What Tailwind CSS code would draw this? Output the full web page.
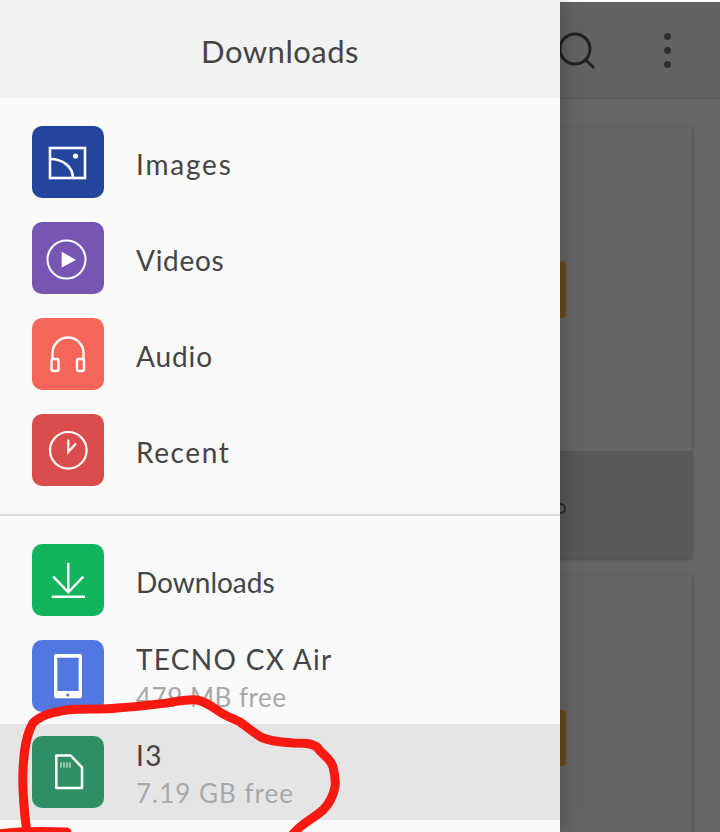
<!DOCTYPE html>
<html lang="en">

<head>
    <meta charset="UTF-8" />
    <meta name="viewport" content="width=device-width, initial-scale=1.0" />
    <title>Downloads drawer</title>
    <script src="https://cdn.jsdelivr.net/npm/@tailwindcss/browser@4"></script>
</head>

<body>
    <div class="relative w-[720px] h-[832px] overflow-hidden bg-white font-['Lato',sans-serif]">
        <!-- Dimmed app behind the drawer -->
        <div class="mt-[2px] h-[830px] bg-[#666666] overflow-hidden">
            <div class="relative h-[97px] bg-[#636363] border-b border-[#585858]">
                <svg class="absolute left-[550px] top-[24px]" width="50" height="50" viewBox="0 0 50 50" fill="none"
                    stroke="#222222" stroke-width="3">
                    <circle cx="25" cy="23" r="15" />
                    <path d="M35 33l9 9" />
                </svg>
                <div class="absolute left-[664px] top-[31px] flex flex-col gap-[7px]">
                    <div class="w-[7px] h-[7px] rounded-full bg-[#2e2e2e]"></div>
                    <div class="w-[7px] h-[7px] rounded-full bg-[#2e2e2e]"></div>
                    <div class="w-[7px] h-[7px] rounded-full bg-[#2e2e2e]"></div>
                </div>
            </div>
            <div class="px-[28px] pt-[28px] flex flex-col gap-[17px]">
                <div class="h-[431px] bg-[#656565] shadow-[0_1px_3px_rgba(0,0,0,0.3)] flex flex-col">
                    <div class="h-[324px] pt-[134px]">
                        <div class="ml-[460px] w-[78px] h-[57px] rounded bg-[#6a4c1c]"></div>
                    </div>
                    <div class="relative h-[107px] bg-[#595959]">
                        <div class="absolute left-[527px] top-[52px] w-[11px] h-[11px] rounded-full border-[2.5px] border-[#2a2a2a]"></div>
                    </div>
                </div>
                <div class="h-[300px] bg-[#656565] shadow-[0_1px_3px_rgba(0,0,0,0.3)] pt-[135px]">
                    <div class="ml-[460px] w-[78px] h-[56px] rounded bg-[#6a4c1c]"></div>
                </div>
            </div>
        </div>

        <!-- Drawer -->
        <div class="absolute left-0 top-0 w-[560px] h-[832px] bg-[#fafafa] shadow-[0_0_24px_rgba(0,0,0,0.3)] flex flex-col">
            <div class="h-[98px] shrink-0 bg-[#f2f2f2] flex items-center justify-center">
                <span class="pt-[4px] text-[31px] tracking-[0.5px] text-[#444444]">Downloads</span>
            </div>

            <div class="pt-[16px] pb-[16px] border-b-2 border-[#dddddd]">
                <div class="h-[96px] pl-[32px] flex items-center gap-[32px]">
                    <div class="w-[72px] h-[72px] rounded-[10px] bg-[#24459c]">
                        <svg width="72" height="72" viewBox="0 0 72 72" fill="none" stroke="#ffffff" stroke-width="2.6">
                            <rect x="18" y="22" width="35" height="30" />
                            <path d="M18 33c13 0 23 8 23 19" />
                            <circle cx="43.5" cy="30" r="2.6" fill="#ffffff" stroke="none" />
                        </svg>
                    </div>
                    <span class="pt-[4px] text-[28px] tracking-[1.8px] text-[#444444]">Images</span>
                </div>
                <div class="h-[96px] pl-[32px] flex items-center gap-[32px]">
                    <div class="w-[72px] h-[72px] rounded-[10px] bg-[#7655b3]">
                        <svg width="72" height="72" viewBox="0 0 72 72" fill="none" stroke="#ffffff" stroke-width="2">
                            <circle cx="34.5" cy="37.5" r="19" />
                            <path d="M29.7 29.7L44 38l-14.3 7.6z" fill="#ffffff" stroke="none" />
                        </svg>
                    </div>
                    <span class="pt-[4px] text-[28px] tracking-[0.7px] text-[#444444]">Videos</span>
                </div>
                <div class="h-[96px] pl-[32px] flex items-center gap-[32px]">
                    <div class="w-[72px] h-[72px] rounded-[10px] bg-[#f5655a]">
                        <svg width="72" height="72" viewBox="0 0 72 72" fill="none" stroke="#ffffff" stroke-width="2.4">
                            <path d="M20.5 41v-6a15.5 15.5 0 0 1 31 0v6" />
                            <rect x="19.5" y="41" width="7" height="12" rx="2" />
                            <rect x="45" y="41" width="7" height="12" rx="2" />
                        </svg>
                    </div>
                    <span class="pt-[4px] text-[28px] tracking-[0.9px] text-[#444444]">Audio</span>
                </div>
                <div class="h-[96px] pl-[32px] flex items-center gap-[32px]">
                    <div class="w-[72px] h-[72px] rounded-[10px] bg-[#db4c4c]">
                        <svg width="72" height="72" viewBox="0 0 72 72" fill="none" stroke="#ffffff" stroke-width="2.2">
                            <circle cx="36.3" cy="36.3" r="18.3" />
                            <path d="M36.3 25.5V38l7.7-8.5" />
                        </svg>
                    </div>
                    <span class="pt-[4px] text-[28px] tracking-[1.6px] text-[#444444]">Recent</span>
                </div>
            </div>

            <div class="pt-[16px]">
                <div class="h-[96px] pl-[32px] flex items-center gap-[32px]">
                    <div class="w-[72px] h-[72px] rounded-[10px] bg-[#12b45d]">
                        <svg width="72" height="72" viewBox="0 0 72 72" fill="none" stroke="#ffffff" stroke-width="2.4">
                            <path d="M36.3 19v29M21.3 32.7l15 15.6 15-15.6M19.7 52.7H53" />
                        </svg>
                    </div>
                    <span class="pt-[4px] text-[28px] text-[#444444]">Downloads</span>
                </div>
                <div class="h-[96px] pl-[32px] flex items-center gap-[32px]">
                    <div class="w-[72px] h-[72px] rounded-[10px] bg-[#5277e0]">
                        <svg width="72" height="72" viewBox="0 0 72 72">
                            <path fill="#ffffff" fill-rule="evenodd"
                                d="M24 14h24a2 2 0 0 1 2 2v40.3a2 2 0 0 1-2 2H24a2 2 0 0 1-2-2V16a2 2 0 0 1 2-2zM25.3 17.7V51h21.4V17.7z" />
                            <circle cx="35.7" cy="55" r="1.6" fill="#5277e0" />
                        </svg>
                    </div>
                    <div class="pt-[4px] flex flex-col">
                        <span class="text-[28px] leading-[38px] tracking-[1.3px] text-[#444444]">TECNO CX Air</span>
                        <span class="text-[26px] leading-[38px] tracking-[0.5px] text-[#a8a8a8]">479 MB free</span>
                    </div>
                </div>
                <div class="h-[96px] pl-[32px] flex items-center gap-[32px] bg-[#e5e5e5]">
                    <div class="w-[72px] h-[72px] rounded-[10px] bg-[#2f9066]">
                        <svg width="72" height="72" viewBox="0 0 72 72" fill="none" stroke="#ffffff" stroke-width="2.5">
                            <path d="M24.3 19.5h14.4L50 31.3V52H24.3z" stroke-linejoin="round" />
                            <path d="M29 26.3v5.4M32 26.3v5.4M35 26.3v5.4M38 26.3v5.4" stroke-width="1" />
                        </svg>
                    </div>
                    <div class="pt-[4px] flex flex-col">
                        <span class="text-[28px] leading-[38px] tracking-[1.5px] text-[#444444]">I3</span>
                        <span class="text-[26px] leading-[38px] tracking-[1px] text-[#a8a8a8]">7.19 GB free</span>
                    </div>
                </div>
            </div>
        </div>

        <!-- Red marker scribble drawn over the screenshot -->
        <svg class="absolute left-0 top-0 pointer-events-none" width="720" height="832" viewBox="0 0 720 832" fill="none"
            stroke="#f81a10" stroke-width="9" stroke-linecap="round" stroke-linejoin="round">
            <path d="M27 834C24 810 22 790 23 770C24 750 26 735 33 723C42 714 55 712 67 710C85 708 100 710 117 708C135 707 150 705 167 703C178 701 188 699 197 700C207 702 212 707 217 710C225 716 232 718 240 722C250 729 256 735 263 738C273 742 283 742 293 743C303 743 311 743 317 747C322 755 330 757 333 767C335 775 336 780 335 787C333 797 329 804 323 810C315 817 306 822 300 827L293 834" />
            <path d="M-2 834C20 831 45 831 67 832" />
        </svg>
    </div>
</body>

</html>
